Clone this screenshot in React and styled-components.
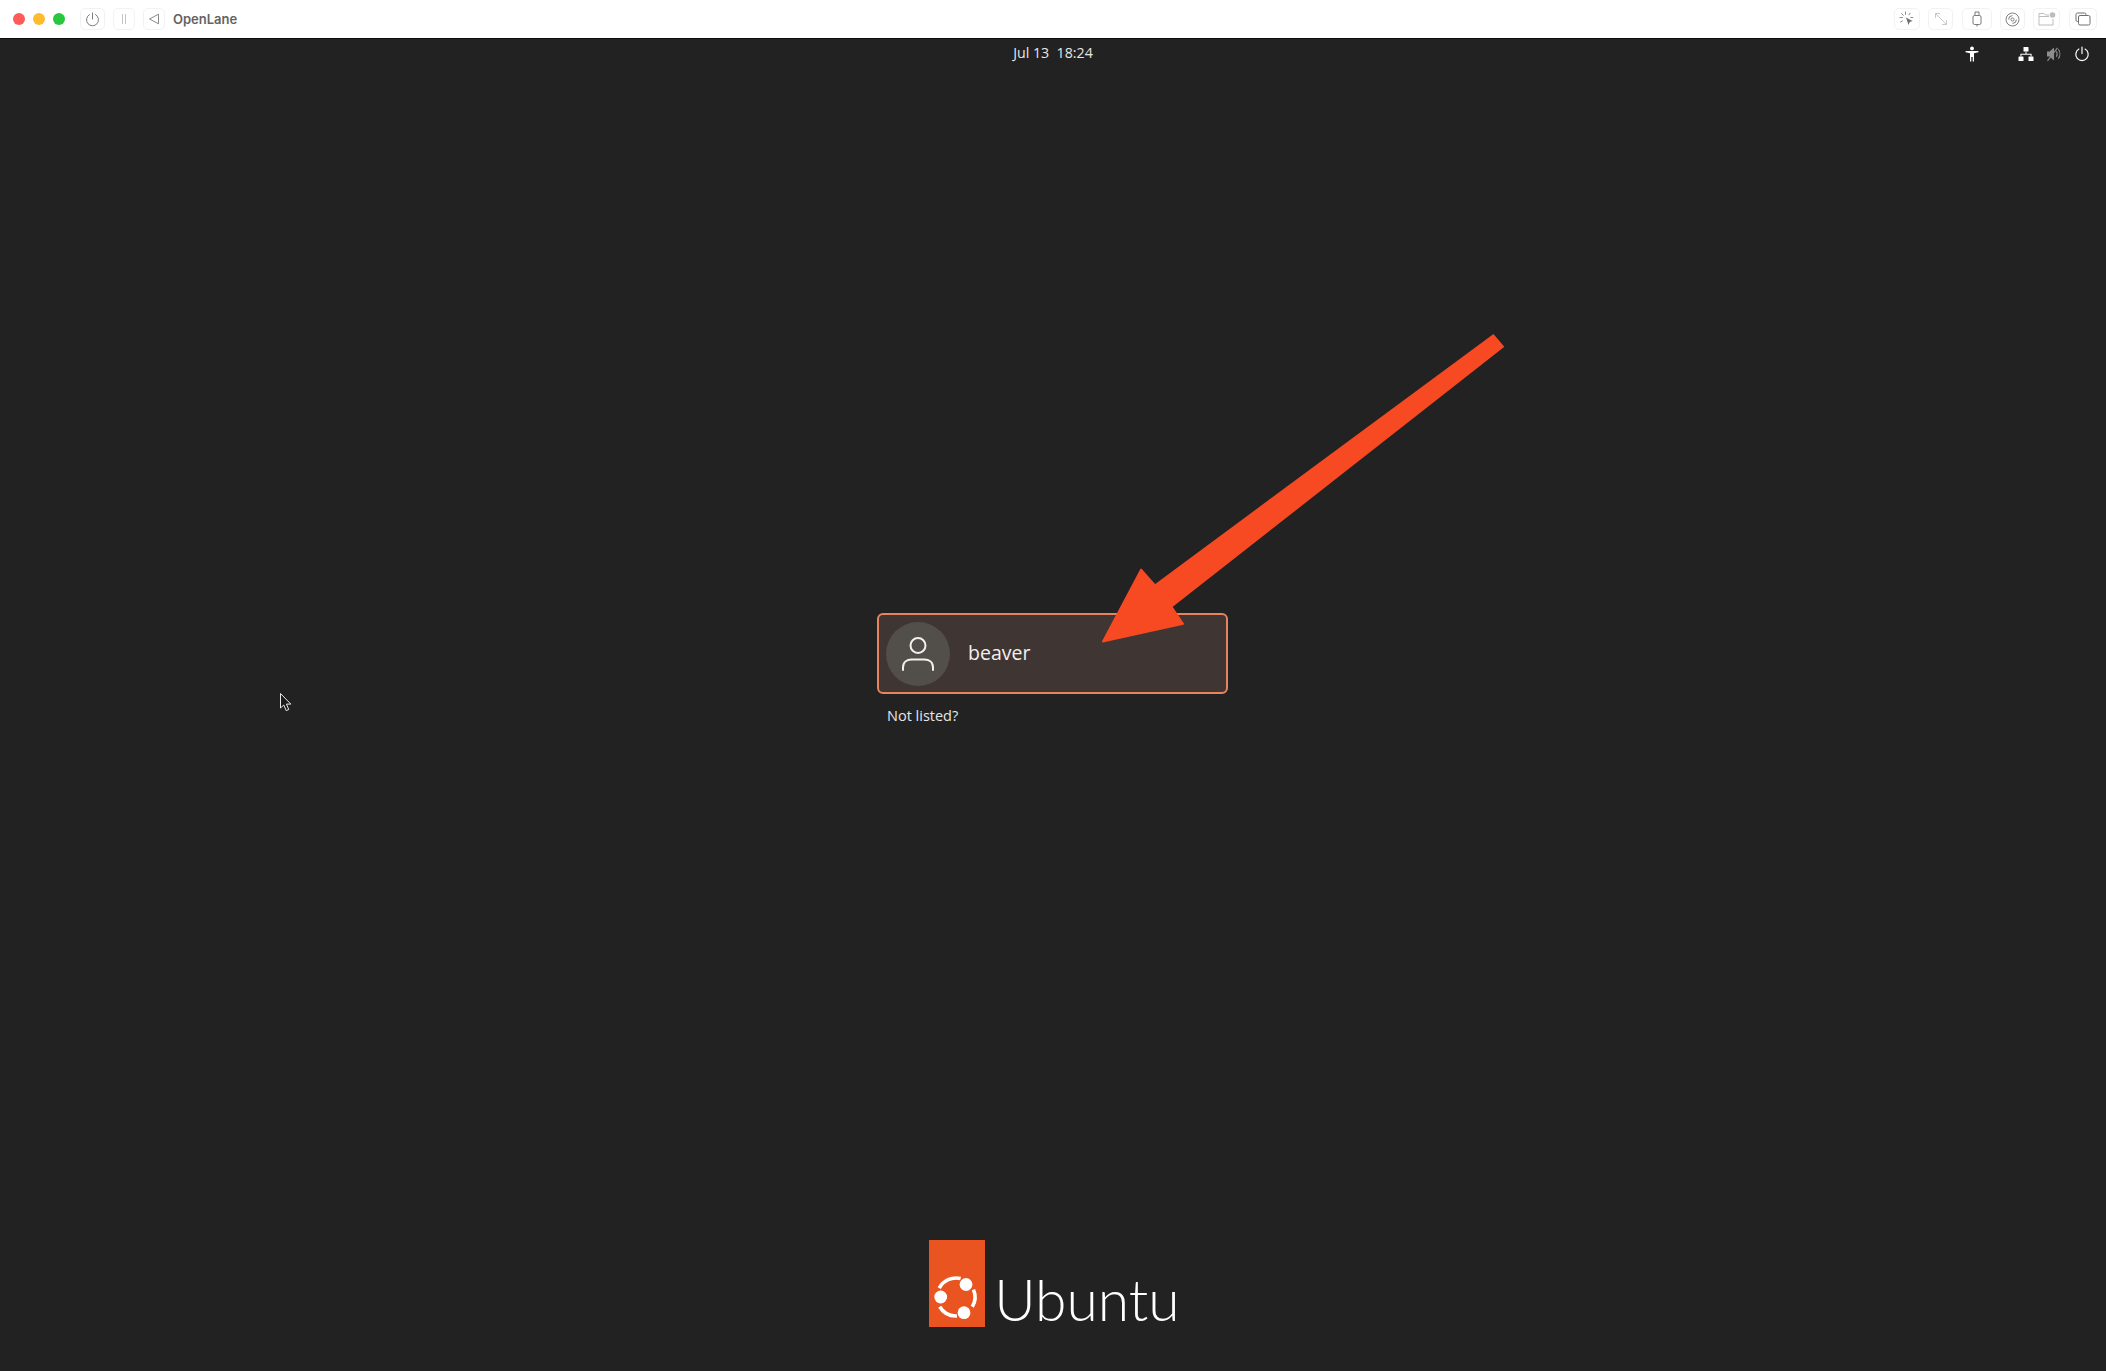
import React from "react";
import styled, { createGlobalStyle } from "styled-components";

const GlobalStyle = createGlobalStyle`
  html, body {
    margin: 0;
    padding: 0;
    background: #222222;
  }
  #root {
    width: 2106px;
    height: 1371px;
    overflow: hidden;
  }
`;

// logo ring is three arcs between the dots, angles in degrees
const arc = (cx, cy, r, from, to) => {
  const rad = (d) => (d * Math.PI) / 180;
  const x1 = cx + r * Math.cos(rad(from));
  const y1 = cy + r * Math.sin(rad(from));
  const x2 = cx + r * Math.cos(rad(to));
  const y2 = cy + r * Math.sin(rad(to));
  return `M${x1.toFixed(2)} ${y1.toFixed(2)}A${r} ${r} 0 0 1 ${x2.toFixed(2)} ${y2.toFixed(2)}`;
};

const leftButtons = [
  {
    id: "power",
    w: 25,
    icon: (
      <svg width="15" height="15" viewBox="0 0 15 15" fill="none" stroke="#7d7d7d" strokeWidth="1" strokeLinecap="round">
        <path d="M4.4 2.6a6 6 0 1 0 6.2 0" />
        <path d="M7.5 1v6" />
      </svg>
    ),
  },
  {
    id: "pause",
    w: 22,
    icon: (
      <svg width="8" height="12" viewBox="0 0 8 12" fill="none" stroke="#c4c4c4" strokeWidth="1">
        <path d="M2.5 1v10M5.5 1v10" />
      </svg>
    ),
  },
  {
    id: "back",
    w: 22,
    icon: (
      <svg width="12" height="12" viewBox="0 0 12 12" fill="none" stroke="#8a8a8a" strokeWidth="1" strokeLinejoin="round">
        <path d="M10.5 1.2v9.6L1.5 6z" />
      </svg>
    ),
  },
];

const rightButtons = [
  {
    id: "capture",
    w: 26,
    gap: 8,
    icon: (
      <svg width="16" height="16" viewBox="0 0 16 16" fill="none" stroke="#8c8c8c" strokeWidth="1" strokeLinecap="round">
        <path d="M6.5 1v2.4M1 6.5h2.4M2.6 2.6l1.7 1.7M11 2.2l-1 1.6M1.6 11l1.8-1M13.8 6.5h-2" />
        <path d="M7 6.5l6.6 3.4-2.8 1-1.3 3z" fill="#707070" stroke="none" />
      </svg>
    ),
  },
  {
    id: "resize",
    w: 25,
    gap: 9,
    icon: (
      <svg width="14" height="14" viewBox="0 0 14 14" fill="none" stroke="#c8c8c8" strokeWidth="1" strokeLinecap="round">
        <path d="M1.5 1.5l11 11M1.5 5.5v-4h4M12.5 8.5v4h-4" />
      </svg>
    ),
  },
  {
    id: "usb",
    w: 30,
    gap: 8,
    icon: (
      <svg width="10" height="16" viewBox="0 0 10 16" fill="none" stroke="#7a7a7a" strokeWidth="1">
        <rect x="1" y="4.5" width="8" height="9" rx="1.5" />
        <path d="M3 4.5V1h4v3.5M5 13.5V15.5" />
      </svg>
    ),
  },
  {
    id: "disc",
    w: 25,
    gap: 8,
    icon: (
      <svg width="15" height="15" viewBox="0 0 15 15" fill="none" stroke="#7f7f7f" strokeWidth="1">
        <circle cx="7.5" cy="7.5" r="6.5" />
        <circle cx="7.5" cy="7.5" r="1.6" />
        <path d="M3.6 7.5a3.9 3.9 0 0 1 3.9-3.9M11.4 7.5a3.9 3.9 0 0 1-3.9 3.9" />
      </svg>
    ),
  },
  {
    id: "folder",
    w: 27,
    gap: 9,
    icon: (
      <svg width="18" height="14" viewBox="0 0 18 14" fill="none" stroke="#bdbdbd" strokeWidth="1">
        <path d="M1 3V1.5h5l1.5 1.5H11M1 3v10h14V7" />
        <path d="M1 4.5h10" />
        <circle cx="14.5" cy="3" r="2.8" fill="#bdbdbd" stroke="none" />
      </svg>
    ),
  },
  {
    id: "windows",
    w: 28,
    gap: 0,
    icon: (
      <svg width="16" height="14" viewBox="0 0 16 14" fill="none" stroke="#707070" strokeWidth="1">
        <path d="M3 9.5H2.5A1.5 1.5 0 0 1 1 8V2.5A1.5 1.5 0 0 1 2.5 1h7A1.5 1.5 0 0 1 11 2.5v1" />
        <rect x="3.5" y="3.5" width="11.5" height="9.5" rx="1.5" />
      </svg>
    ),
  },
];

function App() {
  return (
    <Page>
      <GlobalStyle />

      <Toolbar>
        <ToolGroup>
          <Lights>
            <Light $color="#fd5b57" />
            <Light $color="#febb2e" />
            <Light $color="#27c840" />
          </Lights>
          {leftButtons.map((b) => (
            <ToolButton key={b.id} $w={b.w} $gap={8}>
              {b.icon}
            </ToolButton>
          ))}
          <VmTitle>OpenLane</VmTitle>
        </ToolGroup>
        <ToolGroup>
          {rightButtons.map((b) => (
            <ToolButton key={b.id} $w={b.w} $gap={b.gap}>
              {b.icon}
            </ToolButton>
          ))}
        </ToolGroup>
      </Toolbar>

      <Screen>
        <TopBar>
          <span />
          <Clock>Jul 13&nbsp;&nbsp;18:24</Clock>
          <Tray>
            <TrayIcon $gap={38}>
              <svg width="16" height="16" viewBox="0 0 16 16" fill="#fff">
                <circle cx="8" cy="2.4" r="1.9" />
                <path d="M1.6 4.9h12.8v1.4L10 7.2v8.3H8.7v-4.4H7.3v4.4H6V7.2L1.6 6.3z" />
              </svg>
            </TrayIcon>
            <TrayIcon $gap={12}>
              <svg width="16" height="16" viewBox="0 0 16 16" fill="#fff">
                <rect x="5.5" y="1" width="5" height="4.6" rx="0.6" />
                <rect x="0.5" y="10.4" width="5" height="4.6" rx="0.6" />
                <rect x="10.5" y="10.4" width="5" height="4.6" rx="0.6" />
                <path d="M7.5 5.6h1v2.2h5.1v2.6h-1V8.8H3.4v1.6h-1V7.8h5.1z" />
              </svg>
            </TrayIcon>
            <TrayIcon $gap={12}>
              <svg width="16" height="16" viewBox="0 0 16 16" fill="none">
                <path d="M1 5.5h2.6L8 1.6v12.8l-4.4-3.9H1z" fill="#8d8d8d" />
                <path d="M10.3 5.2c1 1.6 1 4 0 5.6M12.4 3.4c1.9 2.6 1.9 6.6 0 9.2" stroke="#8d8d8d" strokeWidth="1.1" />
                <path d="M1.5 14.8 11.5 1.8" stroke="#8d8d8d" strokeWidth="1.2" />
              </svg>
            </TrayIcon>
            <TrayIcon $gap={0}>
              <svg width="16" height="16" viewBox="0 0 16 16" fill="none" stroke="#fff" strokeWidth="1.2" strokeLinecap="round">
                <path d="M4.9 3.1a6.2 6.2 0 1 0 6.2 0" />
                <path d="M8 1v6.6" />
              </svg>
            </TrayIcon>
          </Tray>
        </TopBar>

        <LoginColumn>
          <UserCard>
            <Avatar>
              <svg width="34" height="36" viewBox="0 0 34 36" fill="none" stroke="#f2f0ee" strokeWidth="2" strokeLinecap="round">
                <circle cx="17" cy="9.5" r="7.5" />
                <path d="M2 34v-2.5C2 26 6 23.5 10.5 23.5h13C28 23.5 32 26 32 31.5V34" />
              </svg>
            </Avatar>
            <UserName>beaver</UserName>
          </UserCard>
          <NotListed>Not listed?</NotListed>
        </LoginColumn>

        <Branding>
          <LogoTile>
            <svg width="56" height="87" viewBox="0 0 56 87">
              <g fill="none" stroke="#fff" strokeWidth="3.6">
                <path d={arc(27, 57, 19, -23, 31)} />
                <path d={arc(27, 57, 19, 87, 149)} />
                <path d={arc(27, 57, 19, 208, 284)} />
              </g>
              <g fill="#fff">
                <circle cx="37" cy="44.5" r="6.4" />
                <circle cx="11.7" cy="57" r="6.4" />
                <circle cx="35" cy="72.7" r="6.4" />
              </g>
            </svg>
          </LogoTile>
          <Wordmark>Ubuntu</Wordmark>
        </Branding>
      </Screen>

      <ArrowOverlay width="2106" height="1371" viewBox="0 0 2106 1371">
        <path
          d="M1493.3 335L1503.3 346.7L1171.7 606.7L1183.3 624L1102.7 641.7L1141 569.3L1155 585Z"
          fill="#f74a23"
          stroke="#f74a23"
          strokeWidth="1.5"
          strokeLinejoin="round"
        />
      </ArrowOverlay>

      <Pointer width="14" height="20" viewBox="0 0 14 20">
        <path d="M0.5 0.5v14.5l3.3-3 2.4 5.6 2.6-1.1-2.4-5.4h4.4z" fill="#1c1c1c" stroke="#e8e8e8" strokeWidth="1" />
      </Pointer>
    </Page>
  );
}

const Page = styled.div`
  position: relative;
  width: 2106px;
  height: 1371px;
  display: flex;
  flex-direction: column;
  background: #222222;
  font-family: "Open Sans", "Noto Sans", sans-serif;
`;

const Toolbar = styled.div`
  height: 38px;
  flex: none;
  display: flex;
  align-items: center;
  justify-content: space-between;
  padding: 0 9px 0 13px;
  background: #fff;
  border-bottom: 1px solid #0c0c0c;
`;

const ToolGroup = styled.div`
  display: flex;
  align-items: center;
`;

const Lights = styled.div`
  display: flex;
  gap: 8px;
  margin-right: 15px;
`;

const Light = styled.div`
  width: 12px;
  height: 12px;
  border-radius: 50%;
  background: ${(p) => p.$color};
`;

const ToolButton = styled.div`
  width: ${(p) => p.$w}px;
  height: 22px;
  box-sizing: border-box;
  margin-right: ${(p) => p.$gap}px;
  display: flex;
  align-items: center;
  justify-content: center;
  border: 1px solid #f2f2f2;
  border-radius: 5px;
`;

const VmTitle = styled.div`
  font-family: "Inter", "Liberation Sans", sans-serif;
  font-size: 13px;
  font-weight: 600;
  color: #636363;
`;

const Screen = styled.div`
  flex: 1;
  display: flex;
  flex-direction: column;
  align-items: center;
  background: #222222;
`;

const TopBar = styled.div`
  width: 100%;
  height: 27px;
  flex: none;
  display: grid;
  grid-template-columns: 1fr auto 1fr;
  align-items: center;
`;

const Clock = styled.div`
  font-size: 14.2px;
  color: #e6e6e6;
`;

const Tray = styled.div`
  display: flex;
  justify-content: flex-end;
  align-items: center;
  padding: 3px 16px 0 0;
`;

const TrayIcon = styled.div`
  display: flex;
  margin-right: ${(p) => p.$gap}px;
`;

const LoginColumn = styled.div`
  width: 351px;
  margin: 547px 1px 0 0;
  display: flex;
  flex-direction: column;
`;

const UserCard = styled.div`
  height: 81px;
  box-sizing: border-box;
  display: flex;
  align-items: center;
  gap: 18px;
  padding-left: 7px;
  background: #3f3533;
  border: 2px solid #e8835f;
  border-radius: 6px;
`;

const Avatar = styled.div`
  width: 64px;
  height: 64px;
  flex: none;
  display: flex;
  align-items: center;
  justify-content: center;
  border-radius: 50%;
  background: #524e4a;
`;

const UserName = styled.div`
  font-size: 19.5px;
  color: #f2f0ee;
  padding-bottom: 3px;
`;

const NotListed = styled.div`
  margin: 12px 0 0 10px;
  font-size: 14.5px;
  color: #e6e6e6;
`;

const Branding = styled.div`
  margin: auto 0 0 3px;
  padding-bottom: 44px;
  display: flex;
  align-items: flex-end;
  gap: 9px;
`;

const LogoTile = styled.div`
  width: 56px;
  height: 87px;
  background: #e95420;
`;

const Wordmark = styled.div`
  font-family: "Lato", sans-serif;
  font-size: 57px;
  font-weight: 300;
  line-height: 58px;
  color: #fff;
  margin-bottom: -1px;
`;

const ArrowOverlay = styled.svg`
  position: absolute;
  left: 0;
  top: 0;
  pointer-events: none;
`;

const Pointer = styled.svg`
  position: absolute;
  left: 280px;
  top: 693px;
`;

export default App;
